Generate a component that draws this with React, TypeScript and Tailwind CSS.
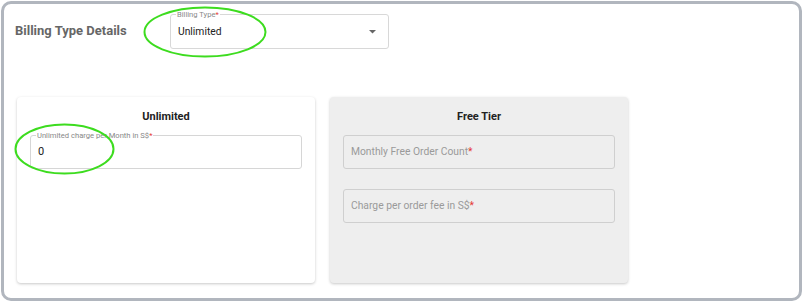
import React from "react";

function Ellipse({ className, w, h }: { className: string; w: number; h: number }) {
  return (
    <svg className={className} width={w} height={h} viewBox={`0 0 ${w} ${h}`} fill="none">
      <ellipse cx={w / 2} cy={h / 2} rx={w / 2 - 1.5} ry={h / 2 - 1.5} stroke="#3ddc1f" strokeWidth="2" />
    </svg>
  );
}

function OutlinedField({ label, value, width }: { label: string; value: string; width: string }) {
  return (
    <div className={`relative ${width} h-[34px] border border-[#d6d6d6] rounded-[3px] flex items-center px-[7px]`}>
      <span className="absolute -top-[5px] left-[5px] bg-white px-[1px] text-[7.6px] leading-[9px] text-[#888]">
        {label}
        <span className="text-[#e53935]">*</span>
      </span>
      <span className="text-[11px] text-[#222] pt-[1px]">{value}</span>
    </div>
  );
}

function PlaceholderField({ label }: { label: string }) {
  return (
    <div className="h-[34px] border border-[#cfcfcf] rounded-[3px] flex items-center px-[7px]">
      <span className="text-[10.3px] text-[#9a9a9a]">
        {label}
        <span className="text-[#e53935]">*</span>
      </span>
    </div>
  );
}

export default function App() {
  return (
    <div className="w-[804px] h-[303px] bg-white pl-[1px] pt-[1px]" style={{ fontFamily: "Roboto, 'Noto Sans', sans-serif" }}>
      <div className="relative w-[801px] h-[300px] border-[3px] border-[#b1b6be] rounded-[10px] bg-white">
        <div className="flex items-center pl-[11px] pt-[10px]">
          <h2 className="text-[13px] font-bold text-[#666] w-[155px] pb-[1px]">Billing Type Details</h2>
          <div className="relative w-[219px] h-[35px] border border-[#d8d8d8] rounded-[3px] flex items-center justify-between px-[7px]">
            <span className="absolute -top-[5px] left-[5px] bg-white px-[1px] text-[7.6px] leading-[9px] text-[#888]">
              Billing Type<span className="text-[#e53935]">*</span>
            </span>
            <span className="text-[10.3px] text-[#222]">Unlimited</span>
            <svg width="7" height="4" viewBox="0 0 7 4" className="mr-[5px]">
              <path d="M0 0 L7 0 L3.5 3.5 Z" fill="#666" />
            </svg>
          </div>
        </div>
        <div className="flex gap-[15px] pl-[13px] pt-[48px]">
          <div className="w-[298px] h-[186px] bg-white rounded-[4px] shadow-[0_1px_3px_rgba(0,0,0,0.22)] px-[13px]">
            <div className="text-center text-[11px] font-bold text-[#222] pt-[12px] pb-[9px]">Unlimited</div>
            <OutlinedField label="Unlimited charge per Month in S$" value="0" width="w-[272px]" />
          </div>
          <div className="w-[298px] h-[186px] bg-[#eeeeee] rounded-[4px] shadow-[0_1px_3px_rgba(0,0,0,0.22)] px-[13px]">
            <div className="text-center text-[11px] font-bold text-[#222] pt-[12px] pb-[9px]">Free Tier</div>
            <div className="flex flex-col gap-[20px]">
              <PlaceholderField label="Monthly Free Order Count" />
              <PlaceholderField label="Charge per order fee in S$" />
            </div>
          </div>
        </div>
        <Ellipse className="absolute left-[139px] top-[2px] pointer-events-none" w={124} h={52} />
        <Ellipse className="absolute left-[10px] top-[119px] pointer-events-none" w={101} h={52} />
      </div>
    </div>
  );
}
